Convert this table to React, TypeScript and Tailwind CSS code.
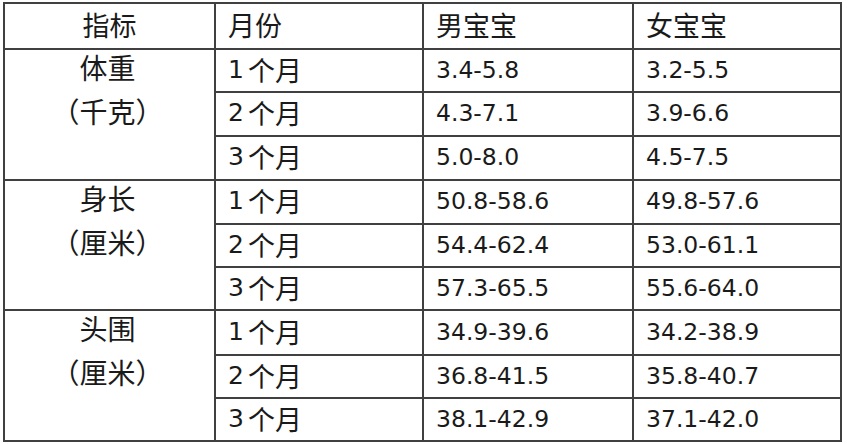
import React from "react";

const groups = [
  {
    label: ["体重", "（千克）"],
    data: [
      ["3.4-5.8", "3.2-5.5"],
      ["4.3-7.1", "3.9-6.6"],
      ["5.0-8.0", "4.5-7.5"],
    ],
  },
  {
    label: ["身长", "（厘米）"],
    data: [
      ["50.8-58.6", "49.8-57.6"],
      ["54.4-62.4", "53.0-61.1"],
      ["57.3-65.5", "55.6-64.0"],
    ],
  },
  {
    label: ["头围", "（厘米）"],
    data: [
      ["34.9-39.6", "34.2-38.9"],
      ["36.8-41.5", "35.8-40.7"],
      ["38.1-42.9", "37.1-42.0"],
    ],
  },
];

const cjk = "font-['Noto_Sans_CJK_SC',sans-serif] text-[27px]";
const num = "font-['DejaVu_Sans','Noto_Sans_CJK_SC',sans-serif] text-[23.5px]";

export default function App() {
  return (
    <div className="w-[849px] h-[444px] bg-white text-[#1a1a1a] overflow-hidden">
      <div className="ml-[3px] mt-[2px] w-fit grid grid-cols-[211px_208px_210px_208px] grid-rows-[46px_43px_44px_44px_44px_43px_43px_45px_43px_43px] border-l-2 border-t-2 border-[#404040]">
        <div className={`border-r-2 border-b-2 border-[#404040] flex items-center justify-center pb-[3px] leading-none ${cjk}`}>
          指标
        </div>
        <div className={`border-r-2 border-b-2 border-[#404040] flex items-center pl-3 pb-[3px] leading-none ${cjk}`}>
          月份
        </div>
        <div className={`border-r-2 border-b-2 border-[#404040] flex items-center pl-3 pb-[3px] leading-none ${cjk}`}>
          男宝宝
        </div>
        <div className={`border-r-2 border-b-2 border-[#404040] flex items-center pl-3 pb-[3px] leading-none ${cjk}`}>
          女宝宝
        </div>
        {groups.map((g, gi) => (
          <React.Fragment key={gi}>
            <div className="row-span-3 border-r-2 border-b-2 border-[#404040] flex flex-col items-center pr-1 font-['Noto_Sans_CJK_SC',sans-serif] text-[28px]">
              <div className="leading-[44px] -mt-[5px]">{g.label[0]}</div>
              <div className="leading-[44px]">{g.label[1]}</div>
            </div>
            {g.data.map((d, i) => (
              <React.Fragment key={i}>
                <div className="border-r-2 border-b-2 border-[#404040] flex items-center pl-3 pb-[3px] leading-none">
                  <span className="font-['DejaVu_Sans',sans-serif] text-[25px] align-[3px] mr-[4px]">{i + 1}</span>
                  <span className={cjk}>个月</span>
                </div>
                <div className={`border-r-2 border-b-2 border-[#404040] flex items-center pl-3 leading-none ${num}`}>
                  {d[0]}
                </div>
                <div className={`border-r-2 border-b-2 border-[#404040] flex items-center pl-3 leading-none ${num}`}>
                  {d[1]}
                </div>
              </React.Fragment>
            ))}
          </React.Fragment>
        ))}
      </div>
    </div>
  );
}
